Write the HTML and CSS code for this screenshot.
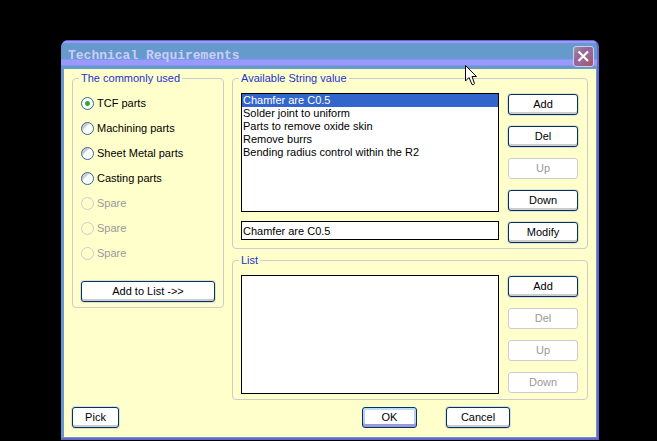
FILE: index.html
```html
<!DOCTYPE html>
<html lang="en">
<head>
<meta charset="utf-8">
<title>Technical Requirements</title>
<link rel="stylesheet" href="styles.css">
</head>
<body>
<form class="window">
  <header class="titlebar">
    <h1 class="title">Technical Requirements</h1>
    <button class="close" type="button" aria-label="Close">
      <svg viewBox="0 0 21 21" width="21" height="21"><path d="M5.5 5.5L15 15M15 5.5L5.5 15" stroke="#fff" stroke-width="2.2" fill="none"/></svg>
    </button>
  </header>
  <main class="content">
    <div class="columns">
      <fieldset class="group presets">
        <legend>The commonly used</legend>
        <label class="choice"><input type="radio" name="preset" checked>TCF parts</label>
        <label class="choice"><input type="radio" name="preset">Machining parts</label>
        <label class="choice"><input type="radio" name="preset">Sheet Metal parts</label>
        <label class="choice"><input type="radio" name="preset">Casting parts</label>
        <label class="choice off"><input type="radio" name="preset" disabled>Spare</label>
        <label class="choice off"><input type="radio" name="preset" disabled>Spare</label>
        <label class="choice off"><input type="radio" name="preset" disabled>Spare</label>
        <button class="btn add-to-list" type="button">Add to List -&gt;&gt;</button>
      </fieldset>
      <div class="editors">
        <fieldset class="group available">
          <legend>Available String value</legend>
          <div class="panel">
            <div class="fields">
              <select class="listbox" size="9" aria-label="Available String value">
                <option selected>Chamfer are C0.5</option>
                <option>Solder joint to uniform</option>
                <option>Parts to remove oxide skin</option>
                <option>Remove burrs</option>
                <option>Bending radius control within the R2</option>
              </select>
              <input class="textbox" type="text" value="Chamfer are C0.5" aria-label="String value">
            </div>
            <div class="actions">
              <button class="btn" type="button">Add</button>
              <button class="btn" type="button">Del</button>
              <button class="btn" type="button" disabled>Up</button>
              <button class="btn" type="button">Down</button>
              <button class="btn" type="button">Modify</button>
            </div>
          </div>
        </fieldset>
        <fieldset class="group chosen">
          <legend>List</legend>
          <div class="panel">
            <div class="fields">
              <select class="listbox" size="9" aria-label="List"></select>
            </div>
            <div class="actions">
              <button class="btn" type="button">Add</button>
              <button class="btn" type="button" disabled>Del</button>
              <button class="btn" type="button" disabled>Up</button>
              <button class="btn" type="button" disabled>Down</button>
            </div>
          </div>
        </fieldset>
      </div>
    </div>
    <footer class="footer">
      <button class="btn pick" type="button">Pick</button>
      <button class="btn ok" type="button">OK</button>
      <button class="btn cancel" type="button">Cancel</button>
    </footer>
  </main>
</form>
<svg class="pointer" viewBox="0 0 13 21" width="13" height="21" aria-hidden="true"><path d="M.5 .5V16L4 12.5L7 19.5Q8.500 20.500 9.500 18.500L7 11.500H11.500Z" fill="#fff" stroke="#000"/></svg>
</body>
</html>
```
FILE: styles.css
```css
* {
  box-sizing: border-box;
}

body {
  margin: 0;
  padding: 40px 58px 2px 61px;
  background: #000;
  color: #000;
  font: 11px/13px "Liberation Sans", Arial, sans-serif;
}

button,
input,
select {
  margin: 0;
  color: inherit;
  font: inherit;
}

.window {
  background: #6464cc;
  border-radius: 7px 7px 0 0;
  overflow: hidden;
}

.titlebar {
  display: flex;
  align-items: center;
  justify-content: space-between;
  height: 29px;
  padding: 3px 5px 0 7px;
  border-right: 2px solid #6666cc;
  border-radius: 7px 7px 0 0;
  background: linear-gradient(#6666cc 0 1px, #9999ff 1px 3px, #6699cc 3px 19px, #9999ff 20px 25px, #6699cc 26px);
}

.title {
  margin: 0;
  color: #ccccff;
  font: bold 13px/16px "Liberation Mono", "Courier New", monospace;
}

.close {
  width: 21px;
  height: 21px;
  margin-right: -2px;
  padding: 0;
  border: 1px solid #ccccff;
  border-radius: 3px;
  background: linear-gradient(135deg, #999999, #996699 35%, #996699 60%, #aa5555);
}

.close svg {
  display: block;
  margin: -1px;
}

.content {
  padding: 2px 8px 9px;
  border: solid #6699cc;
  border-width: 0 1px 1px 3px;
  margin: 0 2px 2px 0;
  background: #ffffcc;
}

.columns {
  display: grid;
  grid-template-columns: 152px 1fr;
  gap: 8px;
  align-items: start;
}

.group {
  min-width: 0;
  margin: 0;
  padding: 8px 8px 5px;
  border: 1px solid #cccccc;
  border-radius: 4px;
}

.group legend {
  margin-left: -2px;
  padding: 0 2px;
  color: #1a33cc;
  line-height: 14px;
}

.presets {
  padding-top: 6px;
}

.choice {
  display: flex;
  align-items: center;
  gap: 3px;
  height: 25px;
}

.choice input {
  appearance: none;
  width: 13px;
  height: 13px;
  border: 1px solid #336699;
  border-radius: 50%;
  background: linear-gradient(135deg, #cccccc 30%, #fff 40%);
}

.choice input:checked {
  background: radial-gradient(circle, #33aa33 2px, #fff 3px);
}

.off {
  color: #999999;
}

.choice input:disabled {
  border-color: #cccccc;
  background: #ffffcc;
}

.btn {
  height: 21px;
  padding: 0 4px;
  border: 1px solid #003366;
  border-radius: 3px;
  background: #fff;
  box-shadow: inset 0 -2px #cccccc, 0 0 0 1px #dfdfcc;
}

.btn:disabled {
  border-color: #cccccc;
  box-shadow: none;
  color: #999999;
}

.add-to-list {
  width: 100%;
  margin-top: 15px;
}

.editors {
  display: grid;
  gap: 4px;
}

.panel {
  display: flex;
  gap: 9px;
}

.fields {
  display: flex;
  flex: 1;
  flex-direction: column;
  gap: 9px;
  min-width: 0;
}

.listbox {
  width: 100%;
  height: 119px;
  padding: 0;
  border: 1px solid #000;
  border-radius: 0;
  outline: 0;
  background: #fff;
  overflow: hidden;
}

.listbox option {
  min-height: 13px;
  padding: 0 1px;
  line-height: 13px;
}

.listbox option:checked {
  background: #3366cc linear-gradient(#3366cc, #3366cc);
  color: #fff;
  -webkit-text-fill-color: #fff;
}

.textbox {
  width: 100%;
  height: 19px;
  padding: 0 1px;
  border: 1px solid #000;
  background: #fff;
}

.actions {
  display: grid;
  flex: 0 0 71px;
  align-content: start;
  gap: 11px;
  padding: 1px 1px 0 0;
}

.footer {
  display: flex;
  margin-top: 7px;
}

.pick {
  width: 47px;
  margin-right: auto;
}

.ok {
  width: 55px;
  margin-right: 29px;
  box-shadow: inset 0 2px #bbddff, inset 0 -3px #9999dd, inset 2px 0 #bbccff, inset -2px 0 #bbccff;
}

.cancel {
  width: 64px;
  margin-right: 78px;
}

.pointer {
  position: absolute;
  top: 65px;
  left: 465px;
}
```
